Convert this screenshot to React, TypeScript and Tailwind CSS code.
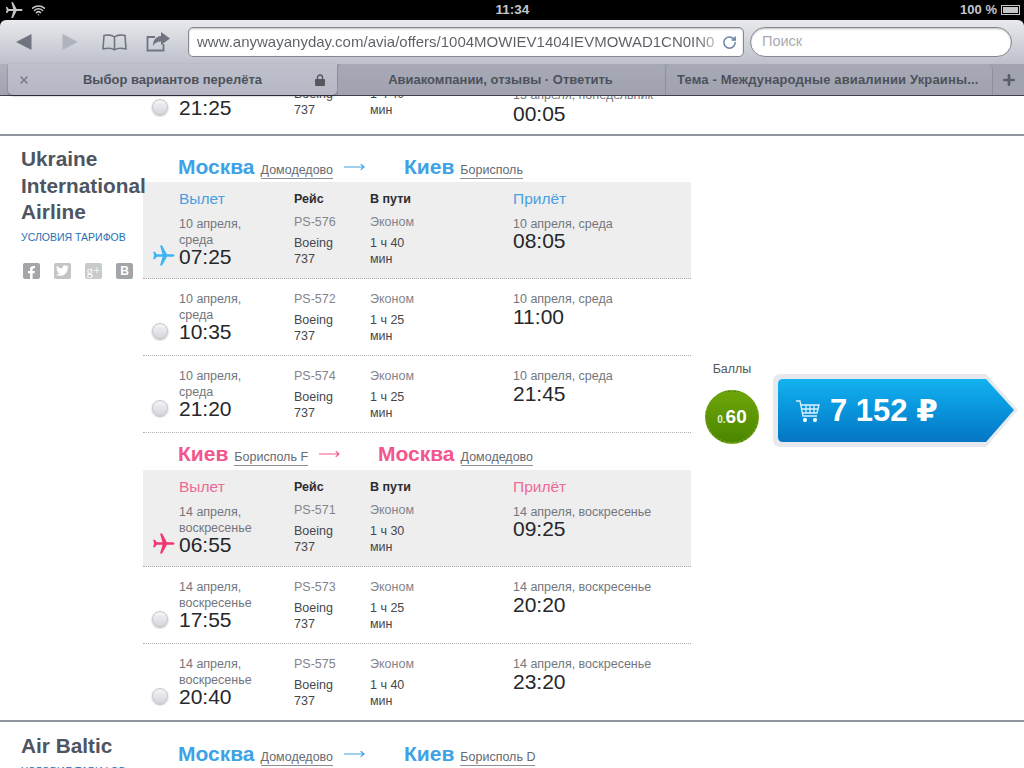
import { Plus, RotateCw, Wifi, X } from "lucide-react"
import { FaFacebookF, FaTwitter } from "react-icons/fa"

interface Flight {
  date: string[]
  time: string
  code: string
  duration: string
  arriveDate: string
  arriveTime: string
}

const OUTBOUND: Flight[] = [
  { date: ["10 апреля,", "среда"], time: "07:25", code: "PS-576", duration: "1 ч 40", arriveDate: "10 апреля, среда", arriveTime: "08:05" },
  { date: ["10 апреля,", "среда"], time: "10:35", code: "PS-572", duration: "1 ч 25", arriveDate: "10 апреля, среда", arriveTime: "11:00" },
  { date: ["10 апреля,", "среда"], time: "21:20", code: "PS-574", duration: "1 ч 25", arriveDate: "10 апреля, среда", arriveTime: "21:45" },
]

const INBOUND: Flight[] = [
  { date: ["14 апреля,", "воскресенье"], time: "06:55", code: "PS-571", duration: "1 ч 30", arriveDate: "14 апреля, воскресенье", arriveTime: "09:25" },
  { date: ["14 апреля,", "воскресенье"], time: "17:55", code: "PS-573", duration: "1 ч 25", arriveDate: "14 апреля, воскресенье", arriveTime: "20:20" },
  { date: ["14 апреля,", "воскресенье"], time: "20:40", code: "PS-575", duration: "1 ч 40", arriveDate: "14 апреля, воскресенье", arriveTime: "23:20" },
]

function PlaneIcon({ className }: { className: string }) {
  return (
    <svg viewBox="0 0 24 24" className={className} fill="currentColor">
      <path d="M23.5 12c0-.9-1.2-1.4-2.7-1.4h-5.3L10.6 1.5H8.4l2.6 9.1H5L3 8H1.2l1 4-1 4H3l2-2.6h6l-2.6 9.1h2.2l4.9-9.1h5.3c1.5 0 2.7-.5 2.7-1.4z" />
    </svg>
  )
}

function Radio() {
  return <div className="w-[16px] h-[16px] rounded-full bg-gradient-to-b from-[#f4f5f7] to-[#d3d6db] border border-[#c4c6cb] shadow-[0_1px_2px_rgba(0,0,0,0.3)]" />
}

function ThinArrow({ className }: { className: string }) {
  return (
    <svg viewBox="0 0 22 10" className={`w-[21px] h-[10px] ${className}`} fill="none" stroke="currentColor" strokeWidth="1.2">
      <path d="M0 5h21M17.500 2 21 5l-3.500 3" />
    </svg>
  )
}

function Route(props: { from: string; fromPort: string; to: string; toPort: string; color: string; fromWidth: string; height: string; pad: string }) {
  return (
    <div className={`flex items-end pl-[35px] ${props.height} ${props.pad}`}>
      <div className={`flex items-baseline shrink-0 ${props.fromWidth}`}>
        <span className={`text-[21px] font-bold leading-[26px] ${props.color}`}>{props.from}</span>
        <span className="ml-[6px] text-[12.500px] leading-[15px] text-[#666a72] border-b border-[#8b8e95]">{props.fromPort}</span>
        <ThinArrow className={`ml-[11px] self-center ${props.color}`} />
      </div>
      <div className="flex items-baseline">
        <span className={`text-[21px] font-bold leading-[26px] ${props.color}`}>{props.to}</span>
        <span className="ml-[6px] text-[12.500px] leading-[15px] text-[#666a72] border-b border-[#8b8e95]">{props.toPort}</span>
      </div>
    </div>
  )
}

function FlightRow({ flight, selected, accent, planeColor, last }: { flight: Flight; selected?: boolean; accent: string; planeColor: string; last?: boolean }) {
  return (
    <div className={`flex flex-col ${selected ? "bg-[#eeeeef] h-[97px]" : last ? "h-[76px] pt-[11px]" : "h-[77px] pt-[11px]"} ${last ? "" : "border-b border-dotted border-[#aeaeb1]"}`}>
      {selected && (
        <div className="flex h-[34px] pt-[8px] pl-[36px] shrink-0 leading-[18px]">
          <div className={`w-[115px] text-[15.500px] ${accent}`}>Вылет</div>
          <div className="w-[76px] text-[12.500px] font-bold text-[#2a2c30]">Рейс</div>
          <div className="w-[143px] text-[12.500px] font-bold text-[#2a2c30]">В пути</div>
          <div className={`text-[15.500px] ${accent}`}>Прилёт</div>
        </div>
      )}
      <div className="flex text-[12.500px] leading-[16px]">
        <div className={`w-[36px] pl-[9px] flex items-end ${selected ? "pb-[2px]" : "pb-[5px]"}`}>
          {selected ? <PlaneIcon className={`w-[23px] h-[23px] shrink-0 -mb-[2px] ${planeColor}`} /> : <Radio />}
        </div>
        <div className={`w-[115px] text-[#74767d] ${selected ? "" : "pt-[1px]"}`}>
          {flight.date.map((line) => (
            <div key={line}>{line}</div>
          ))}
          <div className="text-[21px] leading-[20px] -mt-[1px] text-[#25272b]">{flight.time}</div>
        </div>
        <div className={`w-[76px] ${selected ? "-mt-[2px]" : "pt-[1px]"}`}>
          <div className="text-[#83858b]">{flight.code}</div>
          <div className="text-[#45474c] mt-[5px]">Boeing</div>
          <div className="text-[#45474c]">737</div>
        </div>
        <div className={`w-[143px] ${selected ? "-mt-[2px]" : "pt-[1px]"}`}>
          <div className="text-[#83858b]">Эконом</div>
          <div className="text-[#45474c] mt-[5px]">{flight.duration}</div>
          <div className="text-[#45474c]">мин</div>
        </div>
        <div className={`text-[#74767d] ${selected ? "" : "pt-[1px]"}`}>
          <div>{flight.arriveDate}</div>
          <div className={`text-[21px] leading-[20px] text-[#25272b] ${selected ? "-mt-[1px]" : ""}`}>{flight.arriveTime}</div>
        </div>
      </div>
    </div>
  )
}

function SocialIcons() {
  return (
    <div className="flex gap-[14px] mt-[19px] ml-[2px] text-white">
      <div className="w-[17px] h-[16px] rounded-[2px] bg-[#a3a5a8] flex items-end justify-end pr-[2px] overflow-hidden">
        <FaFacebookF className="w-[13px] h-[13px]" />
      </div>
      <div className="w-[17px] h-[16px] rounded-[2px] bg-[#c2c4c6] flex items-center justify-center">
        <FaTwitter className="w-[13px] h-[13px]" />
      </div>
      <div className="w-[17px] h-[16px] rounded-[2px] bg-[#c8cacc] flex items-center justify-center text-[13px] leading-none font-['Liberation_Serif',serif]">
        g+
      </div>
      <div className="w-[17px] h-[16px] rounded-[2px] bg-[#a3a5a8] flex items-center justify-center text-[12px] font-bold">
        B
      </div>
    </div>
  )
}

function CartIcon() {
  return (
    <svg viewBox="0 0 26 24" className="w-[26px] h-[24px] shrink-0" fill="none" stroke="#d9f1ff" strokeWidth="1.3">
      <path d="M1 2h4l3 15h14" />
      <path d="M6 6h18l-2 8H8M11 6v8M15 6v8M19 6v8M7 10h16" />
      <circle cx="10" cy="21" r="1.5" fill="#fff" />
      <circle cx="20" cy="21" r="1.5" fill="#fff" />
    </svg>
  )
}

function PriceBlock() {
  return (
    <div className="flex pt-[225px] pl-[14px]">
      <div className="w-[54px] flex flex-col items-center">
        <div className="text-[12.500px] leading-[16px] text-[#55575c]">Баллы</div>
        <div className="mt-[13px] w-[54px] h-[54px] rounded-full border-2 border-dotted border-[#6f9f14] bg-gradient-to-b from-[#6ca508] to-[#4c8601] flex items-baseline justify-center pt-[15px] text-white font-bold leading-[20px]">
          <span className="text-[10px] text-[#e3efd0]">0.</span>
          <span className="text-[19px]">60</span>
        </div>
      </div>
      <div className="ml-[14px] mt-[13px] w-[245px] h-[73px] bg-[#e6eaee] [clip-path:path('M8_0H213L245_36L213_73H8Q0_73_0_65V8Q0_0_8_0Z')] pl-[5px] pt-[5px]">
        <div className="w-[236px] h-[63px] bg-gradient-to-b from-[#13b2f1] to-[#0576c4] [clip-path:path('M5_0H208L236_31L208_63H5Q0_63_0_58V5Q0_0_5_0Z')] flex items-center pl-[17px] text-white">
          <CartIcon />
          <span className="ml-[9px] text-[31px] font-bold leading-none font-['Liberation_Sans','DejaVu_Sans',sans-serif]">7 152 ₽</span>
        </div>
      </div>
    </div>
  )
}

function Chrome() {
  return (
    <div className="bg-black shrink-0">
      <div className="h-[20px] flex items-center justify-between pl-[5px] pr-[4px] text-[13px] font-bold text-[#c4c6c9]">
        <div className="flex items-center gap-[8px] w-[200px]">
          <PlaneIcon className="w-[18px] h-[18px]" />
          <Wifi className="w-[15px] h-[14px]" strokeWidth={2.6} />
        </div>
        <div className="text-[13.500px]">11:34</div>
        <div className="flex items-center justify-end gap-[4px] w-[200px]">
          <span>100 %</span>
          <div className="w-[19px] h-[10px] border border-[#c4c6c9] p-[1px]">
            <div className="w-full h-full bg-[#c4c6c9]" />
          </div>
        </div>
      </div>
      <div className="h-[44px] rounded-t-[6px] bg-gradient-to-b from-[#e9eaed] to-[#bdc0cb] flex items-center pl-[16px] text-[#6f7480]">
        <svg viewBox="0 0 16 16" className="w-[16px] h-[16px] shrink-0" fill="currentColor">
          <path d="M15.500 0V16L0 8Z" />
        </svg>
        <svg viewBox="0 0 16 16" className="w-[16px] h-[16px] ml-[30px] shrink-0 text-[#b0b3bd]" fill="currentColor">
          <path d="M.5 0V16L16 8Z" />
        </svg>
        <svg viewBox="0 0 25 17" className="w-[25px] h-[17px] ml-[24px] shrink-0" fill="none" stroke="currentColor" strokeWidth="1.600" strokeLinejoin="round">
          <path d="M12.500 3C10 1 5 .5 2 1.500L1 15c4-1 9-.8 11.500.8C15 14.200 20 14 24 15L23 1.500C20 .5 15 1 12.500 3Zm0 0v12.800" />
        </svg>
        <svg viewBox="0 0 24 20" className="w-[24px] h-[20px] ml-[19px] shrink-0" fill="none" stroke="currentColor" strokeWidth="1.8">
          <path d="M9 5H1.500v13.500h16V12" />
          <path d="M15 0 24 6.500 15 13V9.500c-4 0-6.500 1.500-8 4.500 0-6 3-9.500 8-10Z" fill="currentColor" stroke="none" />
        </svg>
        <div className="ml-[18px] w-[556px] h-[30px] rounded-[5px] bg-white border border-[#85888f] shadow-[inset_0_1px_2px_rgba(0,0,0,0.25)] flex items-center pl-[8px] pr-[6px] shrink-0">
          <span className="w-[526px] overflow-hidden whitespace-nowrap text-[15px] leading-[20px] bg-gradient-to-r from-[#5c5f66] from-[95%] to-[#dddee0] bg-clip-text text-transparent">
            www.anywayanyday.com/avia/offers/1004MOWIEV1404IEVMOWAD1CN0IN0
          </span>
          <RotateCw className="w-[15px] h-[15px] ml-auto text-[#6d84a8] shrink-0" strokeWidth={2.4} />
        </div>
        <div className="ml-[6px] w-[262px] h-[30px] rounded-full bg-white border border-[#85888f] shadow-[inset_0_1px_2px_rgba(0,0,0,0.25)] flex items-center pl-[11px] text-[14.500px] text-[#a9abb0] shrink-0">
          Поиск
        </div>
      </div>
      <div className="h-[32px] flex bg-[#a1a4b0] border-b border-[#3f4248] text-[13px] font-bold text-[#4d515b]">
        <div className="w-[8px] shrink-0 bg-gradient-to-b from-[#aeb1bc] to-[#a2a5b1]" />
        <div className="w-[329px] shrink-0 rounded-b-[5px] bg-gradient-to-b from-[#bec1cc] to-[#b5b8c4] flex items-center pl-[10px] pr-[12px] shadow-[0_1px_2px_rgba(0,0,0,0.4)]">
          <X className="w-[12px] h-[12px] text-[#777a85]" strokeWidth={3} />
          <span className="flex-1 text-center">Выбор вариантов перелёта</span>
          <svg viewBox="0 0 10 12" className="w-[10px] h-[12px] text-[#55585f]" fill="currentColor">
            <path d="M1 5h8a1 1 0 0 1 1 1v5a1 1 0 0 1-1 1H1a1 1 0 0 1-1-1V6a1 1 0 0 1 1-1Z" />
            <path d="M2.500 5V3.500a2.500 2.500 0 0 1 5 0V5" fill="none" stroke="currentColor" strokeWidth="1.400" />
          </svg>
        </div>
        <div className="w-[328px] shrink-0 rounded-t-[5px] border-l border-[#8d909c] bg-gradient-to-b from-[#a7aab6] to-[#a0a3af] flex items-center justify-center pr-[2px]">
          Авиакомпании, отзывы · Ответить
        </div>
        <div className="w-[328px] shrink-0 rounded-t-[5px] border-x border-[#8d909c] bg-gradient-to-b from-[#a7aab6] to-[#a0a3af] flex items-center pl-[11px] tracking-[0.15px]">
          Тема - Международные авиалинии Украины...
        </div>
        <div className="flex-1 flex items-center justify-center text-[#5a5d66]">
          <Plus className="w-[16px] h-[16px]" strokeWidth={4} />
        </div>
      </div>
    </div>
  )
}

function ClippedRow() {
  return (
    <div className="h-[38px] overflow-hidden flex items-end pl-[152px] text-[12.500px] leading-[16px] text-[#45474c]">
      <div className="w-[27px] pb-[19px]">
        <Radio />
      </div>
      <div className="w-[115px] pb-[14px] text-[21px] leading-[24px] text-[#25272b]">21:25</div>
      <div className="w-[76px] pb-[16px]">
        <div>Boeing</div>
        <div>737</div>
      </div>
      <div className="w-[143px] pb-[16px]">
        <div>1 ч 40</div>
        <div>мин</div>
      </div>
      <div className="pb-[10px] text-[#74767d]">
        <div>15 апреля, понедельник</div>
        <div className="text-[21px] leading-[20px] mt-[1px] text-[#25272b]">00:05</div>
      </div>
    </div>
  )
}

export default function App() {
  return (
    <div className="w-[1024px] h-[768px] overflow-hidden flex flex-col bg-white font-['Liberation_Sans',Arial,sans-serif]">
      <Chrome />
      <div className="flex-1 overflow-hidden">
        <ClippedRow />

        <div className="h-[2px] bg-[#8f949d]" />
        <div className="flex h-[584px]">
          <div className="w-[143px] shrink-0 pl-[21px] pt-[10px] relative z-10">
            <div className="text-[20.800px] font-bold leading-[26.500px] text-[#4e5561] whitespace-nowrap">
              Ukraine
              <br />
              International
              <br />
              Airline
            </div>
            <div className="mt-[4px] text-[10.500px] leading-[14px] text-[#1f6fb3] whitespace-nowrap">УСЛОВИЯ ТАРИФОВ</div>
            <SocialIcons />
          </div>
          <div className="w-[548px] shrink-0">
            <Route from="Москва" fromPort="Домодедово" to="Киев" toPort="Борисполь" color="text-[#3ea2e6]" fromWidth="w-[226px]" height="h-[46px]" pad="pb-[2px]" />
            {OUTBOUND.map((f, i) => (
              <FlightRow key={f.code} flight={f} selected={i === 0} accent="text-[#4b9fdf]" planeColor="text-[#3eb4f2]" />
            ))}
            <Route from="Киев" fromPort="Борисполь F" to="Москва" toPort="Домодедово" color="text-[#f2568f]" fromWidth="w-[200px]" height="h-[37px]" pad="pb-[3px]" />
            {INBOUND.map((f, i) => (
              <FlightRow key={f.code} flight={f} selected={i === 0} last={i === 2} accent="text-[#ee6a96]" planeColor="text-[#f2366f]" />
            ))}
          </div>
          <PriceBlock />
        </div>

        <div className="h-[2px] bg-[#8f949d]" />
        <div className="flex">
          <div className="w-[143px] shrink-0 pl-[21px] pt-[11px]">
            <div className="text-[20.800px] font-bold leading-[26.500px] text-[#4e5561]">Air Baltic</div>
            <div className="mt-[4px] text-[10.500px] leading-[14px] text-[#1f6fb3] whitespace-nowrap">УСЛОВИЯ ТАРИФОВ</div>
          </div>
          <div className="w-[548px] shrink-0">
            <Route from="Москва" fromPort="Домодедово" to="Киев" toPort="Борисполь D" color="text-[#3ea2e6]" fromWidth="w-[226px]" height="h-[46px]" pad="pb-[1px]" />
          </div>
        </div>
      </div>
    </div>
  )
}
